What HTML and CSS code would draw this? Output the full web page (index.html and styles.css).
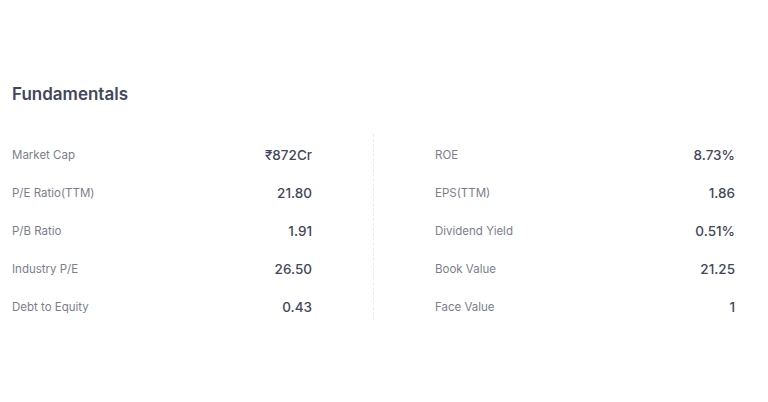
FILE: index.html
```html
<!DOCTYPE html>
<html>
<head>
<meta charset="utf-8">
<link rel="stylesheet" href="styles.css">
</head>
<body>
<section class="fundamentals">
  <h2 class="title">Fundamentals</h2>
  <div class="grid">
    <div class="col">
      <div class="row"><span class="label">Market Cap</span><span class="value">₹872Cr</span></div>
      <div class="row"><span class="label">P/E Ratio(TTM)</span><span class="value">21.80</span></div>
      <div class="row"><span class="label">P/B Ratio</span><span class="value">1.91</span></div>
      <div class="row"><span class="label">Industry P/E</span><span class="value">26.50</span></div>
      <div class="row"><span class="label">Debt to Equity</span><span class="value">0.43</span></div>
    </div>
    <div class="divider"></div>
    <div class="col">
      <div class="row"><span class="label">ROE</span><span class="value">8.73%</span></div>
      <div class="row"><span class="label">EPS(TTM)</span><span class="value">1.86</span></div>
      <div class="row"><span class="label">Dividend Yield</span><span class="value">0.51%</span></div>
      <div class="row"><span class="label">Book Value</span><span class="value">21.25</span></div>
      <div class="row"><span class="label">Face Value</span><span class="value">1</span></div>
    </div>
  </div>
</section>
</body>
</html>
```
FILE: styles.css
```css
* { box-sizing: border-box; }
html, body { margin: 0; padding: 0; background: #ffffff; }
body { font-family: Inter, "Noto Sans", sans-serif; }
.fundamentals { padding: 82px 33px 0 12px; }
.title {
  margin: 0 0 30px 0;
  font-size: 17px;
  line-height: 24px;
  font-weight: 600;
  color: #44475b;
}
.grid {
  display: grid;
  grid-template-columns: 1fr 1px 1fr;
  column-gap: 61px;
}
.col { display: flex; flex-direction: column; }
.row {
  display: flex;
  justify-content: space-between;
  align-items: center;
  height: 38px;
}
.label { font-size: 11.5px; color: #7c7e8c; }
.value { font-size: 13.5px; font-weight: 500; color: #44475b; }
.divider { border-left: 1px dashed #ebebeb; margin-top: -2px; margin-bottom: 6px; }
```
